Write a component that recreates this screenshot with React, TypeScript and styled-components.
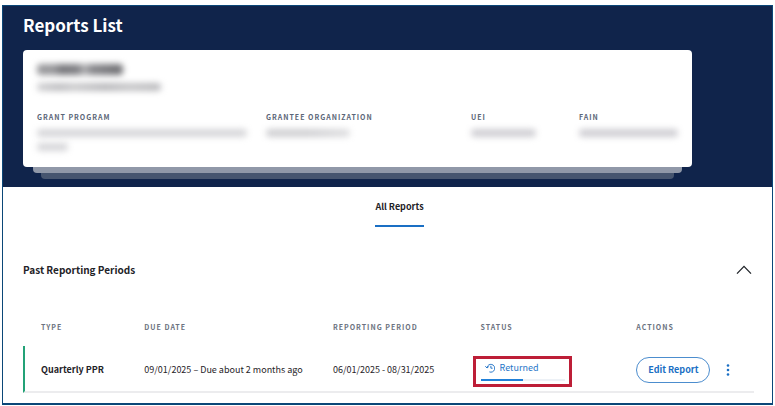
import React from "react";
import styled, { createGlobalStyle } from "styled-components";

const GlobalStyle = createGlobalStyle`
  *, *::before, *::after { box-sizing: border-box; }
  body {
    margin: 0;
    background: #fff;
    color: #1f2328;
    font-family: "Noto Sans CJK SC", "Noto Sans", sans-serif;
    font-size: 9px;
    line-height: 16px;
  }
`;

const Page = styled.div`
  padding: 5px 2px 1px;
`;

const Frame = styled.div`
  border: 1px solid #0b4778;
  border-bottom-width: 2px;
`;

const Header = styled.header`
  display: flex;
  flex-direction: column;
  gap: 13px;
  padding: 7px 80px 8px 20px;
  background: #10244b;
`;

const PageTitle = styled.h1`
  margin: 0;
  color: #fff;
  font-size: 17px;
  line-height: 24px;
  font-weight: 700;
`;

const Card = styled.section`
  min-height: 117px;
  padding: 12px 14px;
  border-radius: 4px;
  background: #fff;
`;

const StackEdge = styled.div<{ $inset: number; $color: string }>`
  height: 6px;
  margin: 0 ${(p) => p.$inset}px;
  border-radius: 0 0 4px 4px;
  background: ${(p) => p.$color};
`;

const Redacted = styled.div<{ $width: number; $tone: string; $size?: number }>`
  width: ${(p) => p.$width}px;
  max-width: 100%;
  height: ${(p) => p.$size ?? 8}px;
  border-radius: 4px;
  background: ${(p) => p.$tone};
  filter: blur(3px);
`;

const Summary = styled.div`
  display: grid;
  gap: 8px;
  padding: 2px 0 18px;
`;

const Details = styled.dl`
  display: grid;
  grid-template-columns: 229fr 205fr 108fr 99fr;
  margin: 0;
`;

const Detail = styled.div`
  min-width: 0;
`;

const DetailLabel = styled.dt`
  color: #5b6678;
  font-size: 7px;
  line-height: 16px;
  font-weight: 700;
  letter-spacing: 1px;
  white-space: nowrap;
`;

const DetailValue = styled.dd`
  display: grid;
  gap: 6px;
  margin: 0;
  padding-top: 4px;
`;

const Tabs = styled.nav`
  display: flex;
  justify-content: center;
  padding: 12px 0 0 24px;
`;

const Tab = styled.button`
  padding: 0 0 10px;
  border: 0;
  border-bottom: 2px solid #1a6fc4;
  background: none;
  color: inherit;
  font: inherit;
  line-height: 16px;
  font-weight: 700;
`;

const Periods = styled.section`
  padding: 33px 18px 10px 20px;
`;

const SectionHeader = styled.div`
  display: flex;
  align-items: center;
  justify-content: space-between;
  padding-right: 2px;
`;

const SectionTitle = styled.h2`
  margin: 0;
  font-size: 10px;
  line-height: 20px;
  font-weight: 700;
`;

const IconButton = styled.button`
  display: inline-flex;
  align-items: center;
  justify-content: center;
  width: 16px;
  height: 20px;
  padding: 0;
  border: 0;
  background: none;
  color: #1a6fc4;
`;

const Table = styled.table`
  width: 100%;
  margin-top: 37px;
  border-collapse: separate;
  border-spacing: 0;
  table-layout: fixed;
`;

const HeadCell = styled.th<{ $width: string; $first?: boolean }>`
  width: ${(p) => p.$width};
  height: 29px;
  padding: 0 0 0 ${(p) => (p.$first ? 18 : 0)}px;
  color: #6b7280;
  font-size: 7px;
  line-height: 20px;
  font-weight: 700;
  letter-spacing: 1px;
  text-align: left;
  vertical-align: top;
  white-space: nowrap;
`;

const Cell = styled.td`
  height: 47px;
  padding: 2px 0 0;
  border-bottom: 2px solid #ececee;
  white-space: nowrap;
`;

const TypeCell = styled(Cell)`
  padding-left: 16px;
  border-left: 2px solid #23a277;
  font-weight: 700;
`;

const StatusBox = styled.div`
  width: 99px;
  height: 31px;
  margin: 4px 0 0 -8px;
  padding: 1px 4px 0 5px;
  border: 3px solid #bd1e37;
`;

const StatusLabel = styled.div`
  display: flex;
  align-items: center;
  gap: 5px;
  padding-left: 4px;
  color: #2676c8;
  line-height: 16px;
`;

const Progress = styled.div`
  height: 2px;
  margin-top: 3px;
  background: #edf1f6;
`;

const ProgressFill = styled.div`
  width: 50%;
  height: 100%;
  background: #2080d8;
`;

const Actions = styled.div`
  display: flex;
  align-items: center;
  gap: 10px;
`;

const EditButton = styled.button`
  height: 26px;
  padding: 0 11px;
  border: 1px solid #4c8dce;
  border-radius: 13px;
  background: #fff;
  color: #1a6fc4;
  font: inherit;
  font-weight: 700;
  white-space: nowrap;
`;

function ChevronUpIcon() {
  return (
    <svg width="16" height="10" viewBox="0 0 16 10" fill="none" stroke="#1f2328" strokeWidth="1.3" aria-hidden="true">
      <path d="M1 8.6 8 1.4l7 7.2" />
    </svg>
  );
}

function HistoryIcon() {
  return (
    <svg width="10" height="10" viewBox="0 0 10 10" fill="none" stroke="currentColor" strokeWidth="1" aria-hidden="true">
      <path d="M2 4.6A3.9 3.9 0 1 1 4.4 8.9" />
      <path d="M.3 3.3 2 5l1.8-1.5M5.9 2.8V5.2H7.6" />
    </svg>
  );
}

function MoreIcon() {
  return (
    <svg width="4" height="14" viewBox="0 0 4 14" fill="currentColor" aria-hidden="true">
      <circle cx="2" cy="2.5" r="1.3" />
      <circle cx="2" cy="7" r="1.3" />
      <circle cx="2" cy="11.5" r="1.3" />
    </svg>
  );
}

const nameTone =
  "linear-gradient(90deg, #98989b 0 20%, #77777b 28%, #808084 48%, #b4b4b7 55%, #88888c 63%, #707074 95%)";
const subtitleTone =
  "linear-gradient(90deg, #cfcfd1 0, #bcbcbf 18%, #c9c9cb 30%, #b7b7ba 55%, #c4c4c6 75%, #b8b8bb)";

const details = [
  { label: "GRANT PROGRAM", lines: [210, 31], tone: "#d6d6d9" },
  { label: "GRANTEE ORGANIZATION", lines: [84], tone: "linear-gradient(90deg, #cfcfd2 50%, #dedee0)" },
  { label: "UEI", lines: [65], tone: "#cfced3" },
  { label: "FAIN", lines: [99], tone: "#cfced3" },
];

const columns = [
  { label: "TYPE", width: "16.6%" },
  { label: "DUE DATE", width: "25.8%" },
  { label: "REPORTING PERIOD", width: "20.2%" },
  { label: "STATUS", width: "21.3%" },
  { label: "ACTIONS", width: "16.1%" },
];

export default function App() {
  return (
    <Page>
      <GlobalStyle />
      <Frame>
        <Header>
          <PageTitle>Reports List</PageTitle>
          <div>
            <Card>
              <Summary>
                <Redacted $width={86} $tone={nameTone} $size={11} />
                <Redacted $width={124} $tone={subtitleTone} />
              </Summary>
              <Details>
                {details.map((d) => (
                  <Detail key={d.label}>
                    <DetailLabel>{d.label}</DetailLabel>
                    <DetailValue>
                      {d.lines.map((w) => (
                        <Redacted key={w} $width={w} $tone={d.tone} />
                      ))}
                    </DetailValue>
                  </Detail>
                ))}
              </Details>
            </Card>
            <StackEdge $inset={10} $color="#9098a8" />
            <StackEdge $inset={18} $color="#46556f" />
          </div>
        </Header>
        <main>
          <Tabs>
            <Tab type="button">All Reports</Tab>
          </Tabs>
          <Periods>
            <SectionHeader>
              <SectionTitle>Past Reporting Periods</SectionTitle>
              <IconButton type="button" aria-label="Collapse past reporting periods" aria-expanded="true">
                <ChevronUpIcon />
              </IconButton>
            </SectionHeader>
            <Table>
              <thead>
                <tr>
                  {columns.map((c, i) => (
                    <HeadCell key={c.label} scope="col" $width={c.width} $first={i === 0}>
                      {c.label}
                    </HeadCell>
                  ))}
                </tr>
              </thead>
              <tbody>
                <tr>
                  <TypeCell>Quarterly PPR</TypeCell>
                  <Cell>09/01/2025 – Due about 2 months ago</Cell>
                  <Cell>06/01/2025 - 08/31/2025</Cell>
                  <Cell>
                    <StatusBox>
                      <StatusLabel>
                        <HistoryIcon />
                        Returned
                      </StatusLabel>
                      <Progress>
                        <ProgressFill />
                      </Progress>
                    </StatusBox>
                  </Cell>
                  <Cell>
                    <Actions>
                      <EditButton type="button">Edit Report</EditButton>
                      <IconButton type="button" aria-label="More actions">
                        <MoreIcon />
                      </IconButton>
                    </Actions>
                  </Cell>
                </tr>
              </tbody>
            </Table>
          </Periods>
        </main>
      </Frame>
    </Page>
  );
}
